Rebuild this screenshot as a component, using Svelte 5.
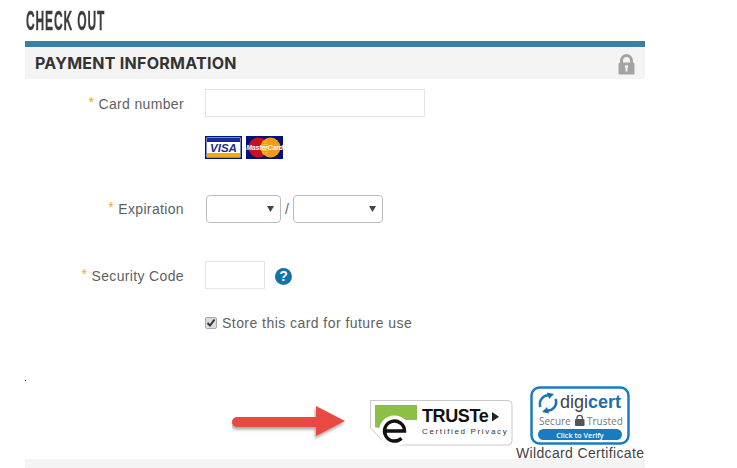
<script>
  let saveCard = true;
</script>

<div class="page">
  <h1>CHECK OUT</h1>

  <section class="panel">
    <header class="panel-head">
      <h2>PAYMENT INFORMATION</h2>
      <svg class="lock" width="17" height="21" viewBox="0 0 17 21">
        <path d="M3.500 9V6.500a5 5 0 0 1 10 0V9" fill="none" stroke="#a3a3a3" stroke-width="3" />
        <rect x="0.500" y="8.500" width="16" height="12" rx="1.500" fill="#a3a3a3" />
        <path d="M8.500 11a1.600 1.600 0 0 1 1 2.900V17.500H7.500V13.900A1.600 1.600 0 0 1 8.500 11z" fill="#f4f4f4" />
      </svg>
    </header>

    <div class="row card-row">
      <label class="lbl" for="card"><i>*</i> Card number</label>
      <div class="ctl">
        <input id="card" class="text wide" type="text" />
      </div>
    </div>

    <div class="cards">
      <svg width="37" height="23" viewBox="0 0 37 23">
        <rect width="37" height="23" fill="#00147f" />
        <rect x="1.500" y="1.500" width="34" height="20" fill="#fff" />
        <rect x="2" y="2" width="33" height="4" fill="#1a2d8f" />
        <rect x="2" y="17" width="33" height="4" fill="#f2a91c" />
        <text x="18.500" y="15.800" class="visa" text-anchor="middle">VISA</text>
      </svg>
      <svg width="37" height="23" viewBox="0 0 37 23">
        <rect width="37" height="23" fill="#00127a" />
        <circle cx="12.500" cy="11.500" r="10" fill="#c8101e" />
        <circle cx="24.500" cy="11.500" r="10" fill="#f49d12" />
        <path d="M16 6h5M15 8.500h7M15 14.500h7M16 17h5" stroke="#f4c430" stroke-width="1" />
        <text x="18.500" y="14" class="mc" text-anchor="middle">MasterCard</text>
      </svg>
    </div>

    <div class="row exp-row">
      <label class="lbl" for="month"><i>*</i> Expiration</label>
      <div class="ctl selects">
        <select id="month" class="month"></select>
        <span class="slash">/</span>
        <select class="year" aria-label="Year"></select>
      </div>
    </div>

    <div class="row sec-row">
      <label class="lbl" for="code"><i>*</i> Security Code</label>
      <div class="ctl">
        <input id="code" class="text short" type="text" />
        <span class="help">?</span>
      </div>
    </div>

    <div class="store">
      <input id="store" type="checkbox" bind:checked={saveCard} />
      <label for="store">Store this card for future use</label>
    </div>

    <div class="dot"></div>

    <div class="badges">
      <svg class="arrow" width="116" height="36" viewBox="0 0 116 36">
        <defs>
          <filter id="sh" x="-10%" y="-30%" width="120%" height="170%">
            <feDropShadow dx="-1" dy="2.500" stdDeviation="1.800" flood-color="#000" flood-opacity="0.35" />
          </filter>
        </defs>
        <path d="M5 12H84V1L113 16 84 31V22H5a5 5 0 0 1 0-10z" fill="#e8493f" filter="url(#sh)" />
      </svg>

      <svg class="truste" width="143" height="46" viewBox="0 0 143 46">
        <path d="M.5 .5H138a4 4 0 0 1 4 4V41a4 4 0 0 1-4 4H17L.5 28z" fill="#fff" stroke="#c9c9c9" />
        <path d="M5 5H47V20H36L20 31 5 27z" fill="#8cc044" />
        <circle cx="24.500" cy="31" r="15.500" fill="#fff" />
        <path d="M15 31H34.500A10 10 0 1 0 31.500 38.200" fill="none" stroke="#111" stroke-width="3.400" />
        <text x="52" y="21.800" class="tr-name">TRUSTe</text>
        <path d="M122 12l7 4.800-7 4.800z" fill="#222" />
        <text x="52" y="34" class="tr-sub">Certified Privacy</text>
      </svg>

      <div class="cert">
        <svg width="100" height="59" viewBox="0 0 100 59">
          <rect x="1.500" y="1.500" width="97" height="56" rx="8" fill="#fff" stroke="#1a7cc0" stroke-width="2.500" />
          <path d="M10.500 21A8.500 8.500 0 0 1 20 9.500" fill="none" stroke="#1b7ab8" stroke-width="2.500" />
          <path d="M25.500 13A8.500 8.500 0 0 1 16 24.500" fill="none" stroke="#1b6fb0" stroke-width="2.500" />
          <path d="M17 6.500L24 8 19 13zM19 27.500L12 26 17 21z" fill="#1b6fb0" />
          <text x="30" y="21.500" class="dc-name">digi<tspan class="dc-bold">cert</tspan></text>
          <text x="9" y="38.500" class="dc-sec">Secure</text>
          <rect x="45" y="33" width="9.500" height="7" rx="1" fill="#555" />
          <path d="M47 33.500v-1.500a2.700 2.700 0 0 1 5.400 0v1.500" fill="none" stroke="#555" stroke-width="1.300" />
          <text x="57" y="38.500" class="dc-sec">Trusted</text>
          <rect x="8" y="43" width="84" height="11" rx="5.500" fill="#1a7cc0" />
          <text x="50" y="51.500" class="dc-btn" text-anchor="middle">Click to Verify</text>
        </svg>
        <div class="wild">Wildcard Certificate</div>
      </div>
    </div>
  </section>

  <div class="foot"></div>
</div>

<style>
  :global(body) {
    background: #fff;
    overflow: hidden;
  }

  .page {
    width: 620px;
    height: 468px;
    margin-left: 25px;
    overflow: hidden;
    font-family: "Liberation Sans", Arial, sans-serif;
    color: #5c5c5c;
  }

  h1 {
    margin: 0;
    height: 41px;
    padding: 8px 0 0 2px;
    box-sizing: border-box;
    font-family: "Liberation Sans", sans-serif;
    font-size: 27px;
    line-height: 26px;
    font-weight: 700;
    letter-spacing: 2px;
    color: #3c3c3c;
    white-space: nowrap;
    transform: scaleX(0.445);
    transform-origin: left;
    -webkit-text-stroke: 0.3px #3c3c3c;
  }

  .panel {
    border-top: 6px solid #3a7ea6;
    height: 418px;
    box-sizing: border-box;
  }

  .panel-head {
    height: 32px;
    background: #f4f4f4;
    display: flex;
    align-items: center;
    justify-content: space-between;
    padding: 0 10px;
  }

  h2 {
    margin: 0;
    font-family: Inter, Lato, sans-serif;
    font-size: 16px;
    font-weight: 700;
    letter-spacing: 0.26px;
    color: #333;
  }

  .lock {
    display: block;
    margin-top: 2px;
  }

  .row {
    display: grid;
    grid-template-columns: 159px 1fr;
    column-gap: 21px;
    align-items: center;
    height: 28px;
  }

  .card-row {
    margin-top: 10px;
  }

  .exp-row {
    margin-top: 36px;
  }

  .sec-row {
    margin-top: 38px;
  }

  .lbl {
    text-align: right;
    font-size: 14px;
    letter-spacing: 0.35px;
    color: #5f5f5f;
    padding-top: 1px;
  }

  .exp-row .lbl {
    padding-top: 0;
  }

  .lbl i {
    font-style: normal;
    color: #f5a623;
    position: relative;
    top: -2px;
  }

  .ctl {
    display: flex;
    align-items: center;
  }

  .text {
    display: block;
    box-sizing: border-box;
    height: 28px;
    margin: 0;
    padding: 0;
    background: #fff;
    border: 1px solid #e4e4e4;
  }

  .wide {
    width: 220px;
  }

  .short {
    width: 60px;
  }

  .cards {
    display: flex;
    gap: 4px;
    margin: 19px 0 0 180px;
    height: 23px;
  }

  .visa {
    font: italic 700 11.500px "Liberation Sans", sans-serif;
    fill: #1a2d8f;
  }

  .mc {
    font: italic 700 7px "Liberation Sans", sans-serif;
    fill: #fff;
    letter-spacing: -0.2px;
  }

  .selects {
    padding-left: 1px;
  }

  select {
    appearance: none;
    box-sizing: border-box;
    height: 28px;
    margin: 0;
    border: 1px solid #bbb;
    border-radius: 4px;
    background-color: #fff;
    background-repeat: no-repeat;
    background-image: url("data:image/svg+xml,%3Csvg xmlns='http://www.w3.org/2000/svg' width='7' height='6'%3E%3Cpath d='M0 0h7L3.500 6z' fill='%23444'/%3E%3C/svg%3E");
    background-size: 7px 6px;
    background-position: right 6px center;
  }

  .month {
    width: 75px;
  }

  .year {
    width: 90px;
  }

  .slash {
    width: 12px;
    text-align: center;
    font-size: 14px;
    color: #666;
  }

  .help {
    width: 17px;
    height: 17px;
    margin-left: 10px;
    margin-top: 2px;
    border-radius: 50%;
    background: #1173a8;
    color: #fff;
    font-size: 14px;
    line-height: 17px;
    font-weight: 700;
    text-align: center;
  }

  .store {
    display: flex;
    align-items: center;
    gap: 5px;
    margin: 26px 0 0 180px;
    height: 16px;
    font-size: 14px;
    letter-spacing: 0.45px;
    color: #5f5f5f;
  }

  .store input {
    appearance: none;
    box-sizing: border-box;
    width: 12px;
    height: 12px;
    margin: 0;
    border: 1px solid #a8a8a8;
    border-radius: 2px;
    background: #dcdcdc no-repeat center;
  }

  .store input:checked {
    background-image: url("data:image/svg+xml,%3Csvg xmlns='http://www.w3.org/2000/svg' width='10' height='10'%3E%3Cpath d='M1.500 5l2.500 2.500 4.500-6' fill='none' stroke='%23333' stroke-width='2'/%3E%3C/svg%3E");
  }

  .dot {
    width: 1px;
    height: 1px;
    background: #222;
    margin-top: 49px;
  }

  .badges {
    display: flex;
    align-items: flex-start;
    margin-top: 5px;
    padding-left: 207px;
    height: 74px;
  }

  .arrow {
    margin-top: 19px;
    flex: none;
  }

  .truste {
    margin: 14px 0 0 22px;
    flex: none;
  }

  .tr-name {
    font: 700 18px "Liberation Sans", sans-serif;
    fill: #111;
    letter-spacing: -0.4px;
  }

  .tr-sub {
    font: 400 8px "Liberation Sans", sans-serif;
    fill: #333;
    letter-spacing: 1.650px;
  }

  .cert {
    margin-left: 17px;
    width: 100px;
    position: relative;
  }

  .cert svg {
    display: block;
  }

  .dc-name {
    font: 400 18px "Liberation Sans", sans-serif;
    fill: #444;
  }

  .dc-bold {
    font-weight: 700;
    fill: #1b6fb0;
  }

  .dc-sec {
    font: 400 10px "Open Sans", sans-serif;
    fill: #777;
  }

  .dc-btn {
    font: 600 7.200px "Open Sans", sans-serif;
    fill: #fff;
  }

  .wild {
    position: absolute;
    top: 59px;
    left: -14px;
    white-space: nowrap;
    font-size: 14px;
    line-height: 16px;
    letter-spacing: 0.35px;
    color: #444;
  }

  .foot {
    height: 9px;
    background: #f4f4f4;
  }
</style>
